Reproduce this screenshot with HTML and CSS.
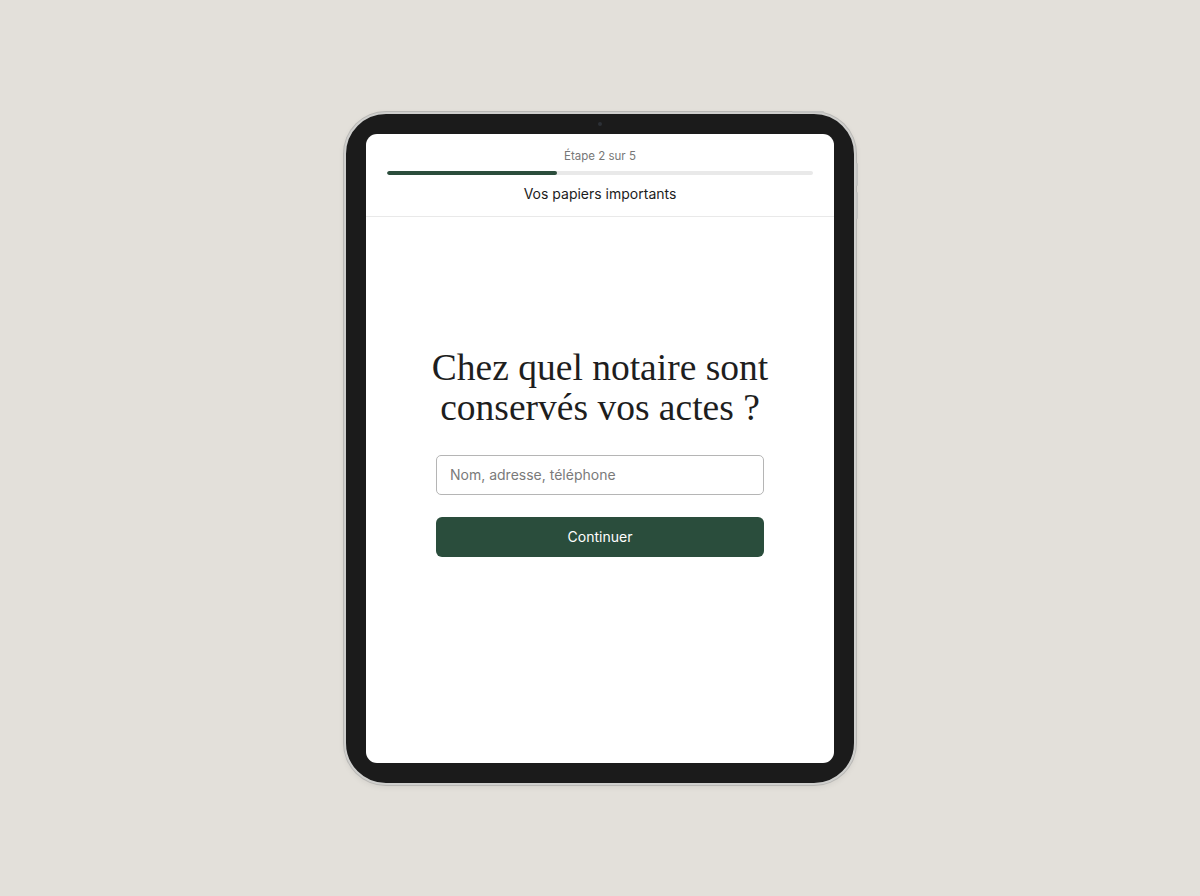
FILE: index.html
```html
<!DOCTYPE html>
<html lang="fr">
<head>
<meta charset="utf-8">
<title>Vos papiers importants</title>
<link rel="stylesheet" href="styles.css">
</head>
<body>
<div class="stage">
  <div class="tablet">
    <span class="btn-top"></span>
    <span class="btn-side btn-side-1"></span>
    <span class="btn-side btn-side-2"></span>
    <span class="camera"></span>
    <div class="screen">
      <header class="header">
        <div class="step">Étape 2 sur 5</div>
        <div class="progress"><div class="progress-fill" style="width:40%"></div></div>
        <div class="title">Vos papiers importants</div>
      </header>
      <main class="content">
        <h1 class="question">Chez quel notaire sont<br>conservés vos actes ?</h1>
        <input class="field" type="text" placeholder="Nom, adresse, téléphone">
        <button class="cta" type="button">Continuer</button>
      </main>
    </div>
  </div>
</div>
</body>
</html>
```
FILE: styles.css
```css
html, body {
  margin: 0;
  padding: 0;
}
body {
  background: #e3e0da;
  font-family: Inter, "Liberation Sans", Arial, sans-serif;
}
.stage {
  width: 1200px;
  height: 896px;
  display: flex;
  align-items: center;
  justify-content: center;
}
.tablet {
  position: relative;
  width: 512px;
  height: 673px;
  box-sizing: border-box;
  border: 2px solid #cfcfcd;
  border-radius: 42px;
  background: #1b1b1b;
  padding: 20px;
  box-shadow: 0 0 0 1px #b9b8b5, 0 2px 6px rgba(0,0,0,0.08);
}
.btn-top {
  position: absolute;
  top: -3px;
  right: 30px;
  width: 32px;
  height: 2px;
  background: #c4c4c2;
  border-radius: 1px;
}
.btn-side {
  position: absolute;
  right: -4px;
  width: 2px;
  background: #c4c4c2;
  border-radius: 1px;
}
.btn-side-1 { top: 49px; height: 23px; }
.btn-side-2 { top: 78px; height: 27px; }
.camera {
  position: absolute;
  top: 8px;
  left: 50%;
  width: 4px;
  height: 4px;
  margin-left: -2px;
  border-radius: 50%;
  background: #2c3036;
}
.screen {
  width: 100%;
  height: 100%;
  background: #ffffff;
  border-radius: 11px;
  overflow: hidden;
  display: flex;
  flex-direction: column;
}
.header {
  height: 83px;
  box-sizing: border-box;
  border-bottom: 1px solid #e9e9e9;
  padding: 14px 21px 0;
  display: flex;
  flex-direction: column;
  align-items: center;
}
.step {
  font-size: 11.5px;
  line-height: 16px;
  color: #777777;
}
.progress {
  width: 100%;
  height: 4px;
  margin-top: 7px;
  border-radius: 2px;
  background: #e9e9e9;
  overflow: hidden;
}
.progress-fill {
  height: 100%;
  background: #2b4d3c;
  border-radius: 2px;
}
.title {
  margin-top: 10px;
  font-size: 14px;
  line-height: 18px;
  color: #1c1c1c;
}
.content {
  flex: 1;
  display: flex;
  flex-direction: column;
  align-items: center;
  padding-top: 131px;
}
.question {
  margin: 0;
  font-family: "Liberation Serif", "Times New Roman", serif;
  font-weight: 400;
  font-size: 37.5px;
  line-height: 40px;
  letter-spacing: 0;
  color: #1e1e1e;
  text-align: center;
}
.field {
  margin-top: 27px;
  width: 328px;
  height: 40px;
  box-sizing: border-box;
  border: 1px solid #b5b5b5;
  border-radius: 5px;
  padding: 0 13px;
  font-family: Inter, "Liberation Sans", Arial, sans-serif;
  font-size: 14px;
  color: #222;
  background: #fff;
  outline: none;
}
.field::placeholder {
  color: #7a7a7a;
}
.cta {
  margin-top: 22px;
  width: 328px;
  height: 40px;
  border: none;
  border-radius: 6px;
  background: #2a4d3c;
  color: #ffffff;
  font-family: Inter, "Liberation Sans", Arial, sans-serif;
  font-size: 14px;
  cursor: pointer;
}
```
